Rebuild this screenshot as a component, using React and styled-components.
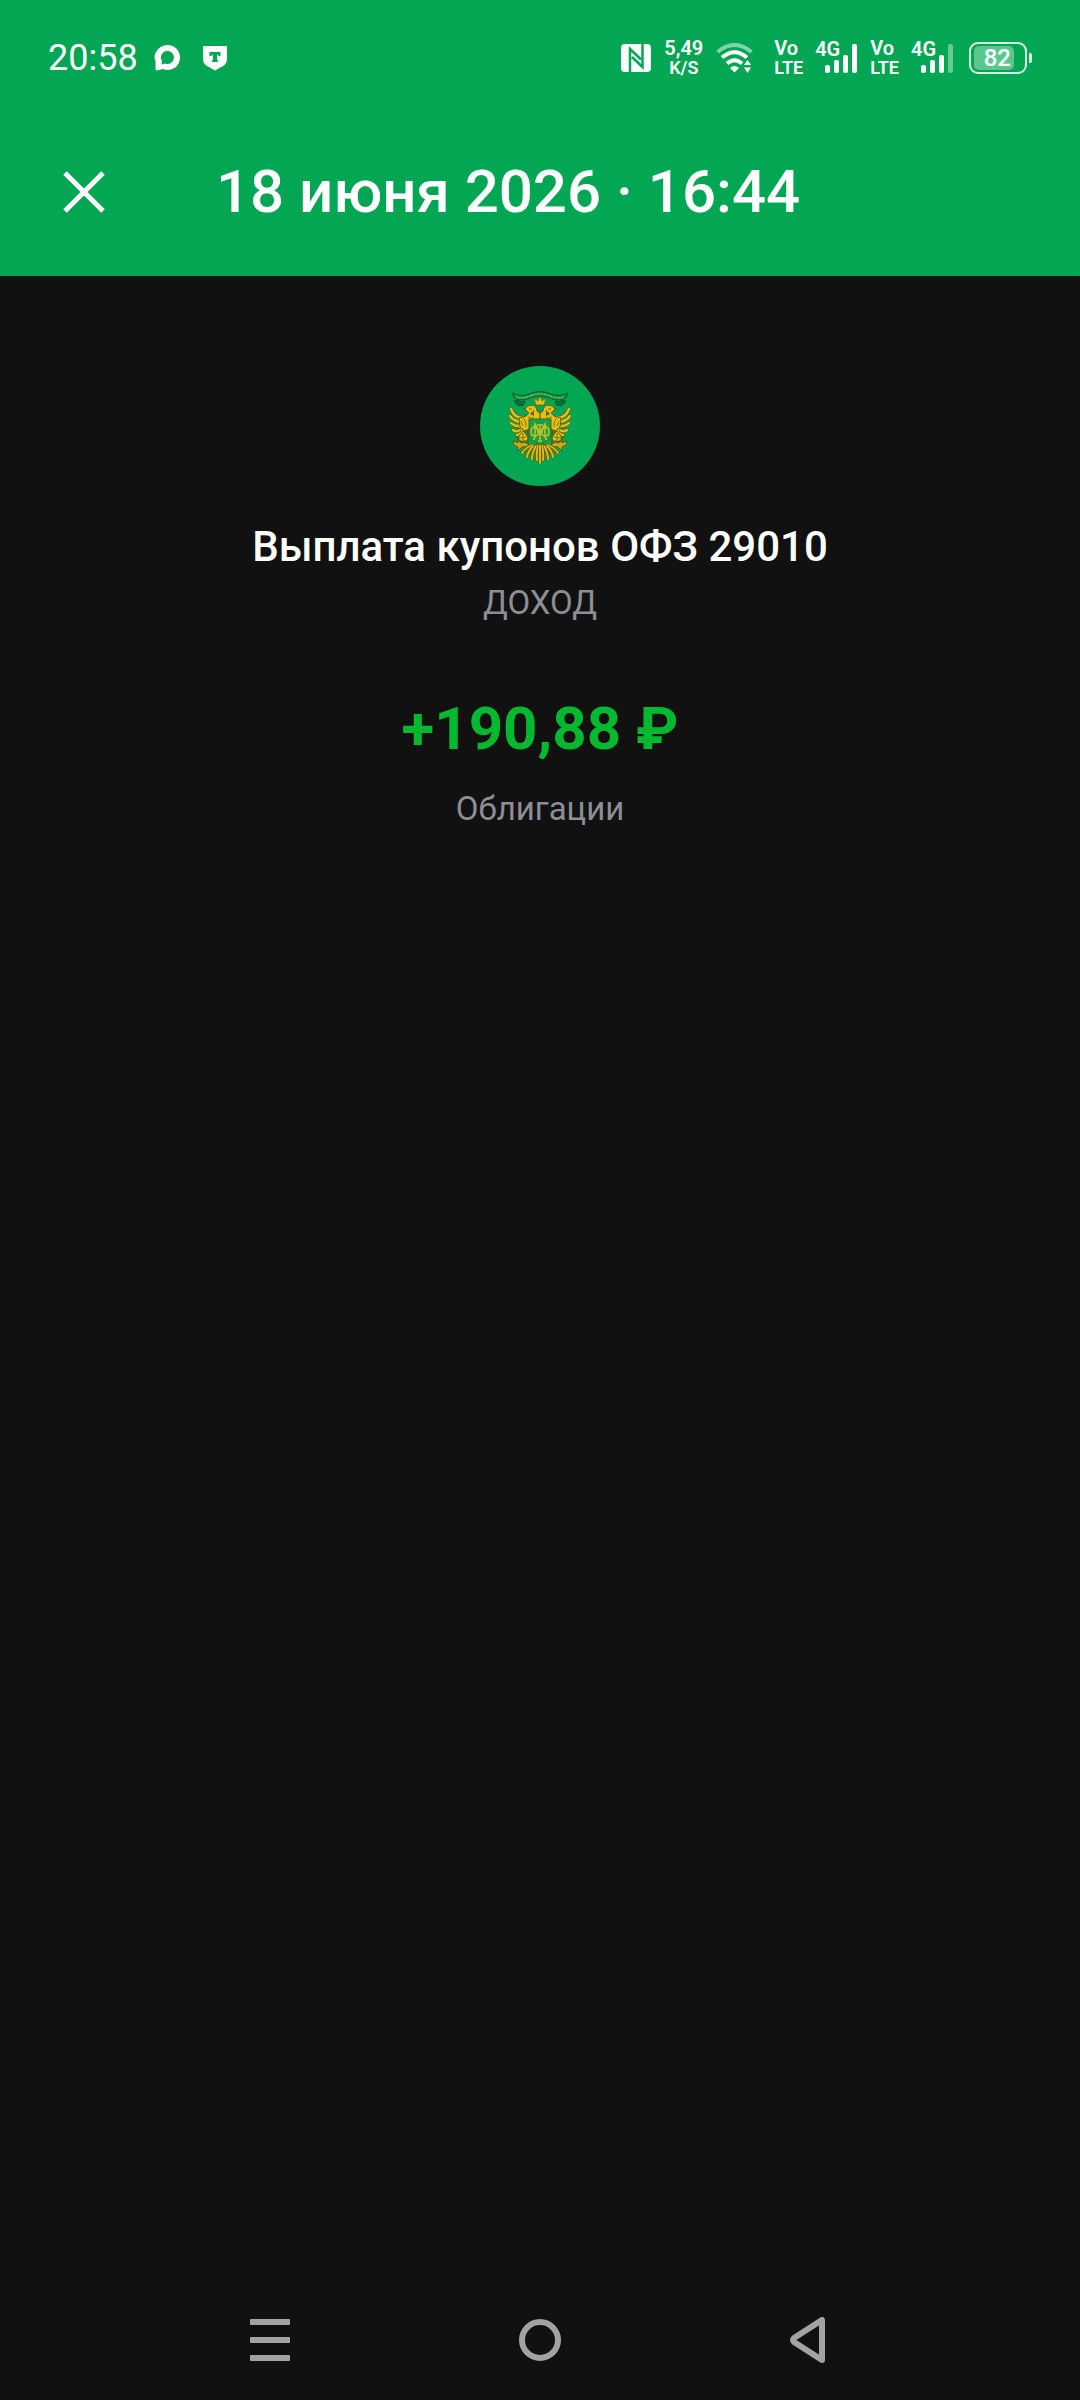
import React from "react";
import styled, { createGlobalStyle } from "styled-components";

const GlobalStyle = createGlobalStyle`
  body {
    margin: 0;
    background: #111111;
    font-family: Roboto, "Noto Sans", sans-serif;
  }
`;

const Screen = styled.div`
  display: flex;
  flex-direction: column;
  min-height: 100vh;
  color: #ffffff;
  background: #111111;
`;

const Header = styled.header`
  background: #02a653;
`;

const StatusBar = styled.div`
  display: flex;
  align-items: center;
  justify-content: space-between;
  height: 116px;
  padding: 0 48px;
`;

const StatusGroup = styled.div`
  display: flex;
  align-items: center;
  gap: ${(props) => props.$gap};
`;

const Time = styled.time`
  font-size: 36px;
  line-height: 44px;
`;

const Stacked = styled.div`
  display: flex;
  flex-direction: column;
  align-items: ${(props) => props.$align || "flex-start"};
  font-size: 18px;
  font-weight: 600;
  line-height: 19px;
`;

const TopLine = styled.span`
  font-size: 20px;
`;

const Signal = styled.div`
  position: relative;
  display: flex;
  width: 43px;
  height: 36px;
`;

const Network = styled.span`
  position: absolute;
  top: 0;
  left: 0;
  font-size: 20px;
  font-weight: 600;
  line-height: 18px;
`;

const Battery = styled.div`
  display: flex;
  align-items: center;
  gap: 2px;
`;

const BatteryCell = styled.div`
  box-sizing: border-box;
  display: flex;
  width: 58px;
  height: 32px;
  padding: 2px 3px;
  border: 2px solid #d9f3e5;
  border-radius: 9px;
`;

const BatteryLevel = styled.div`
  box-sizing: border-box;
  display: flex;
  align-items: center;
  justify-content: flex-end;
  width: 40px;
  padding-right: 3px;
  border-radius: 5px;
  background: #5bc78f;
  font-size: 24px;
  font-weight: 500;
  line-height: 24px;
`;

const BatteryTip = styled.div`
  width: 3px;
  height: 10px;
  border-radius: 0 2px 2px 0;
  background: #d9f3e5;
`;

const TitleBar = styled.div`
  display: flex;
  align-items: center;
  gap: 84px;
  padding: 28px 36px 36px;
`;

const IconButton = styled.button`
  display: flex;
  align-items: center;
  justify-content: center;
  width: 96px;
  height: 96px;
  padding: 0;
  border: 0;
  background: none;
  color: ${(props) => props.$color || "#ffffff"};
  cursor: pointer;
`;

const Title = styled.h1`
  margin: 0;
  font-size: 60px;
  font-weight: 500;
  line-height: 72px;
`;

const Content = styled.main`
  display: flex;
  flex: 1;
  flex-direction: column;
  align-items: center;
  padding: 90px 32px 0;
`;

const Emblem = styled.svg`
  width: 120px;
  height: 120px;
`;

const Name = styled.h2`
  margin: 36px 0 0;
  font-size: 42px;
  font-weight: 500;
  line-height: 50px;
`;

const Note = styled.p`
  margin: ${(props) => props.$top} 0 0;
  color: #8e8e95;
  font-size: 33px;
  line-height: 40px;
`;

const Amount = styled.p`
  margin: 70px 0 0;
  color: #04b92f;
  font-size: 60px;
  font-weight: 700;
  line-height: 72px;
`;

const NavBar = styled.nav`
  display: grid;
  grid-template-columns: repeat(3, 1fr);
  align-items: center;
  justify-items: center;
  height: 120px;
  padding: 0 12.5%;
`;

const ChatIcon = () => (
  <svg width="28" height="28" viewBox="0 0 28 28" aria-hidden="true">
    <path
      fill="#fff"
      fillRule="evenodd"
      d="M14.500 1C21.500 1 27 6.500 27 13.500S21.500 26 14.500 26Q12 26 10 25L4 26.500Q2.500 26.500 2.500 25V17Q1.500 15 1.500 13C2 6 8 1 14.500 1Zm0 6a6.500 6.500 0 0 0-5.500 10l-.5 3.500 3.500-1A6.500 6.500 0 1 0 14.500 7Z"
    />
  </svg>
);

const ShieldIcon = () => (
  <svg width="26" height="26" viewBox="0 0 26 26" aria-hidden="true">
    <path
      fill="#fff"
      fillRule="evenodd"
      d="M1 1H25V14Q25 18.500 21 21L13 25.500 5 21Q1 18.500 1 14ZM7.500 7v4H9.500q0-1.500 1.500-1.500V14q0 1.500-1 1.500v1.500h6v-1.500q-1 0-1-1.500V9.500q1.500 0 1.500 1.500h2V7Z"
    />
  </svg>
);

const NfcIcon = () => (
  <svg width="30" height="28" viewBox="0 0 30 28" aria-hidden="true">
    <rect width="30" height="28" rx="4" fill="#fff" />
    <path
      d="M9 28V5L20 15.500M21.500 0V23L11 13"
      fill="none"
      stroke="#02a653"
      strokeWidth="2.500"
    />
  </svg>
);

const WifiIcon = () => (
  <svg width="38" height="30" viewBox="0 0 38 30" aria-hidden="true">
    <g fill="none" stroke="#fff" strokeWidth="4">
      <path d="M1.500 9Q18.500-5 35.500 9" opacity=".5" />
      <path d="M6 14.500Q18.500 4 31 14.500" />
      <path d="M11 20.500Q18.500 14 26 20.500" />
    </g>
    <path
      fill="#fff"
      d="M14 25Q18.500 21 23 25L18.500 29.500ZM31.500 17l3.500 5h-7ZM31.500 30l3.500-5.500h-7Z"
    />
  </svg>
);

const SignalBars = ({ level }) => (
  <svg width="43" height="36" viewBox="0 0 43 36" aria-hidden="true">
    {[8, 13, 18, 29].map((height, i) => (
      <rect
        key={height}
        x={10 + i * 9}
        y={33 - height}
        width="5"
        height={height}
        rx="2"
        fill="#fff"
        opacity={i < level ? 1 : 0.4}
      />
    ))}
  </svg>
);

const Volte = () => (
  <Stacked>
    <TopLine>Vo</TopLine>
    <span>LTE</span>
  </Stacked>
);

const Cellular = ({ level }) => (
  <Signal>
    <Network>4G</Network>
    <SignalBars level={level} />
  </Signal>
);

const gold = "#e8bd12";
const olive = "#5b6412";

// each feather is a wide dark stroke with a thinner gold one on top
const Feathers = ({ paths, width }) => (
  <g fill="none" strokeLinecap="round">
    {paths.map((d) => (
      <g key={d}>
        <path d={d} stroke={olive} strokeWidth={width + 1.2} />
        <path d={d} stroke={gold} strokeWidth={width} />
      </g>
    ))}
  </g>
);

const wing = [
  "M44 52Q34 52 31 43",
  "M43 56Q34 56 30 50",
  "M42 60Q35 61 31 57",
  "M42 63Q37 67 33 64",
  "M43 64Q40 69 37 69",
];

const tail = [
  "M52 79Q45 82 42 87",
  "M68 79Q75 82 78 87",
  "M53 80Q48 85 47 91",
  "M67 80Q72 85 73 91",
  "M56 80Q52 87 52 93",
  "M64 80Q68 87 68 93",
  "M58 80Q56 88 57 94",
  "M62 80Q64 88 63 94",
  "M60 79V97",
];

const EagleHalf = () => (
  <g strokeLinejoin="round">
    <path
      d="M34 35Q38 33 41 36L45 35 44 39 39 40 36 38Z"
      fill="#04703a"
      stroke="#075c30"
    />
    <path d="M38 54H49V80H44L36 72Z" fill="#2f7a2c" />
    <Feathers paths={wing} width={2.4} />
    <path
      d="M60 50V55H50V62L45 65 40 61 39 52 46 50 49 47 45 43Q47 39 52 39 57 40 57 45L60 47Z"
      fill={gold}
      stroke={olive}
      strokeWidth="1"
    />
    <path d="M45 42L42 43 46 44ZM54 44L50 48 54 50" fill={olive} />
    <path
      d="M43 52Q46 54 46 61M41 55L43 60M48 51Q50 53 54 52M49 43H52"
      fill="none"
      stroke={olive}
      strokeWidth=".8"
    />
    <path
      d="M43 65Q46 67 48 72L47 75H39V70Z"
      fill={gold}
      stroke={olive}
      strokeWidth="1"
    />
    <path d="M43 67V74M40 72L46 71" stroke={olive} strokeWidth=".8" />
    <path
      d="M33 75L38 77 37 74 41 77 45 76 50 80 42 81 38 85 38 81 34 79Z"
      fill="#d0a915"
      stroke={olive}
      strokeWidth="1"
    />
  </g>
);

const App = () => {
  return (
    <Screen>
      <GlobalStyle />
      <Header>
        <StatusBar>
          <StatusGroup $gap="15px">
            <Time>20:58</Time>
            <StatusGroup $gap="21px">
              <ChatIcon />
              <ShieldIcon />
            </StatusGroup>
          </StatusGroup>
          <StatusGroup $gap="15px">
            <StatusGroup $gap="20px">
              <StatusGroup $gap="13px">
                <NfcIcon />
                <Stacked $align="center">
                  <TopLine>5,49</TopLine>
                  <span>K/S</span>
                </Stacked>
                <WifiIcon />
              </StatusGroup>
              <StatusGroup $gap="12px">
                <Volte />
                <Cellular level={4} />
                <Volte />
                <Cellular level={3} />
              </StatusGroup>
            </StatusGroup>
            <Battery>
              <BatteryCell>
                <BatteryLevel>82</BatteryLevel>
              </BatteryCell>
              <BatteryTip />
            </Battery>
          </StatusGroup>
        </StatusBar>
        <TitleBar>
          <IconButton aria-label="Закрыть">
            <svg width="42" height="42" viewBox="0 0 42 42">
              <path d="M2 2L40 40M40 2L2 40" stroke="currentColor" strokeWidth="5" />
            </svg>
          </IconButton>
          <Title>18 июня 2026 · 16:44</Title>
        </TitleBar>
      </Header>

      <Content>
        <Emblem viewBox="0 0 120 120" aria-hidden="true">
          <circle cx="60" cy="60" r="60" fill="#02a653" />
          <EagleHalf />
          <g transform="translate(120 0) scale(-1 1)">
            <EagleHalf />
          </g>
          <path d="M52 78H68L76 86 68 92 60 95 52 92 44 86Z" fill="#4f7a1e" />
          <Feathers paths={tail} width={1.8} />

          {/* ribbon */}
          <path
            d="M32 27Q41 31 49 28 60 23 71 28 79 31 88 27L86 32Q78 36 70 32 60 28 50 32 42 36 34 32Z"
            fill="#079049"
            stroke="#06602f"
            strokeWidth="1"
          />
          <path
            d="M36 31Q43 33 50 30 60 26 70 30 77 33 84 31"
            fill="none"
            stroke="#8cc04a"
            strokeWidth="1.6"
            strokeDasharray="1.4 .8"
          />

          {/* crown */}
          <path
            d="M56 39L54 32 58 35 60 30 62 35 66 32 64 39Z"
            fill={gold}
            stroke={olive}
            strokeWidth=".6"
          />

          {/* shield with monogram */}
          <path
            d="M49 53H71V69Q71 74 66 75L60 79 54 75Q49 74 49 69Z"
            fill="#02a653"
            stroke={olive}
            strokeWidth="1"
          />
          <g fill="none" stroke="#dcbb1b" strokeWidth="1.500">
            <path d="M53 74Q55 73 55 70V58L60 67 65 58V70Q65 73 67 74" />
            <path d="M55 61Q51 61 51 65.500T55 70 58 65.500 55 61ZM65 61Q69 61 69 65.500T65 70 62 65.500 65 61Z" />
            <path d="M60 60V75M57 59H63M58 75H62" />
          </g>
        </Emblem>
        <Name>Выплата купонов ОФЗ 29010</Name>
        <Note $top="11px">ДОХОД</Note>
        <Amount>+190,88 ₽</Amount>
        <Note $top="24px">Облигации</Note>
      </Content>

      <NavBar>
        <IconButton aria-label="Недавние" $color="#a3a3a3">
          <svg width="40" height="42" viewBox="0 0 40 42" fill="currentColor">
            <rect width="40" height="6" rx="1" />
            <rect y="18" width="40" height="6" rx="1" />
            <rect y="36" width="40" height="6" rx="1" />
          </svg>
        </IconButton>
        <IconButton aria-label="Домой" $color="#a3a3a3">
          <svg width="42" height="42" viewBox="0 0 42 42" fill="none">
            <circle cx="21" cy="21" r="18" stroke="currentColor" strokeWidth="6" />
          </svg>
        </IconButton>
        <IconButton aria-label="Назад" $color="#a3a3a3">
          <svg width="40" height="46" viewBox="0 0 40 46" fill="none">
            <path
              d="M32 3V43L4 25Q2 23 4 21Z"
              stroke="currentColor"
              strokeWidth="6"
              strokeLinejoin="round"
            />
          </svg>
        </IconButton>
      </NavBar>
    </Screen>
  );
};

export default App;
